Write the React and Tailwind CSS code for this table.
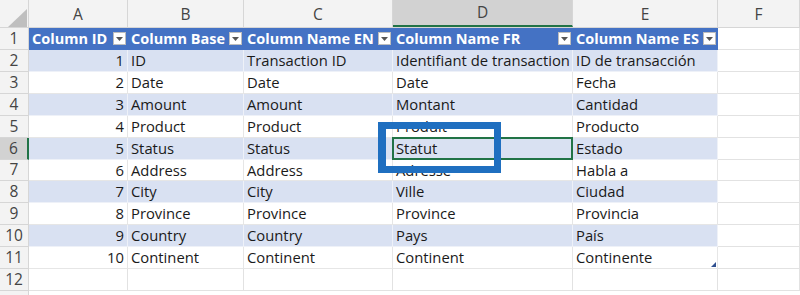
import React from "react";

const colW = ["w-[29px]", "w-[99px]", "w-[116px]", "w-[149px]", "w-[180px]", "w-[145px]"];
const rowH = ["h-[22px]", "h-[22px]", "h-[22px]", "h-[22px]", "h-[22px]", "h-[22px]", "h-[21px]", "h-[22px]", "h-[22px]", "h-[22px]", "h-[22px]", "h-[22px]"];

const data = [
  [1, "ID", "Transaction ID", "Identifiant de transaction", "ID de transacción"],
  [2, "Date", "Date", "Date", "Fecha"],
  [3, "Amount", "Amount", "Montant", "Cantidad"],
  [4, "Product", "Product", "Produit", "Producto"],
  [5, "Status", "Status", "Statut", "Estado"],
  [6, "Address", "Address", "Adresse", "Habla a"],
  [7, "City", "City", "Ville", "Ciudad"],
  [8, "Province", "Province", "Province", "Provincia"],
  [9, "Country", "Country", "Pays", "País"],
  [10, "Continent", "Continent", "Continent", "Continente"],
];

const headers = ["Column ID", "Column Base", "Column Name EN", "Column Name FR", "Column Name ES"];

function Drop() {
  return (
    <div className="w-[13px] h-[13px] bg-white border border-[#bdbdbd] flex items-center justify-center shrink-0 mr-[2px]">
      <svg width="7" height="4" viewBox="0 0 7 4"><path d="M0 0 L7 0 L3.5 4 Z" fill="#555" /></svg>
    </div>
  );
}

export default function App() {
  const font = { fontFamily: '"Open Sans", "Noto Sans", sans-serif' };
  return (
    <div className="relative w-[800px] h-[295px] overflow-hidden bg-white text-[14.8px] text-[#1a1a1a]" style={font}>
      {/* column letters */}
      <div className="flex h-[28px] bg-[#f3f3f3] border-b border-[#d6d6d6] text-[15.5px]">
        <div className={`${colW[0]} relative border-r border-[#d6d6d6] shrink-0`}>
          <svg className="absolute left-[8px] top-[9px]" width="19" height="18" viewBox="0 0 19 18"><path d="M0 18 L19 0 L19 18 Z" fill="#bfbfbf" /></svg>
        </div>
        {["A", "B", "C", "D", "E"].map((l, i) => (
          <div key={l} className={`${colW[i + 1]} shrink-0 flex items-end justify-center pb-[1px] border-r border-[#d6d6d6] text-[#444] ${l === "D" ? "bg-[#d2d2d2] border-b-2 border-b-[#217346]" : ""}`}>{l}</div>
        ))}
        <div className="w-[82px] shrink-0 flex items-end justify-center pb-[1px] border-r border-[#d6d6d6] text-[#444]">F</div>
        <div className="flex-1" />
      </div>

      {/* rows */}
      {Array.from({ length: 12 }).map((_, r) => {
        const rowNum = r + 1;
        const isHeader = r === 0;
        const d = r >= 1 && r <= 10 ? data[r - 1] : null;
        const banded = d && r % 2 === 1;
        const bg = isHeader ? "bg-[#4472c4] text-white font-bold text-[14.5px]" : banded ? "bg-[#d9e1f2]" : "bg-white";
        const sel = rowNum === 6;
        return (
          <div key={r} className={`flex ${rowH[r]}`}>
            <div className={`${colW[0]} shrink-0 flex items-center justify-center border-b border-[#d6d6d6] text-[#444] text-[15.5px] ${sel ? "bg-[#d2d2d2] border-r-2 border-r-[#217346]" : "bg-[#f3f3f3] border-r border-r-[#d6d6d6]"}`}>{rowNum}</div>
            {[0, 1, 2, 3, 4].map((c) => {
              let content = null;
              let cls = "";
              if (isHeader) {
                content = (
                  <>
                    <span className="pl-[3px] whitespace-nowrap overflow-hidden flex-1">{headers[c]}</span>
                    <Drop />
                  </>
                );
                cls = `${bg} border-b border-[#4472c4]`;
              } else if (d) {
                const v = d[c];
                cls = `${bg} border-b border-r ${banded ? "border-[#eef1f8]" : "border-[#e6e6e6]"}`;
                content = c === 0
                  ? <span className="w-full text-right pr-[3px]">{v}</span>
                  : <span className="pl-[3px] whitespace-nowrap">{v}</span>;
              } else {
                cls = "bg-white border-b border-r border-[#e2e2e2]";
              }
              const selected = sel && c === 3;
              return (
                <div key={c} className={`${colW[c + 1]} shrink-0 flex items-center relative ${cls}`}>
                  {content}
                  {selected && <div className="absolute inset-[-1px] border-2 border-[#217346] pointer-events-none" />}
                  {rowNum === 11 && c === 4 && (
                    <svg className="absolute right-[1px] bottom-[1px]" width="5" height="5" viewBox="0 0 5 5"><path d="M5 0 L5 5 L0 5 Z" fill="#2f4f8f" /></svg>
                  )}
                </div>
              );
            })}
            <div className="flex-1 flex">
              <div className="w-[82px] border-b border-r border-[#e2e2e2] bg-white" />
              <div className="flex-1 border-b border-[#e2e2e2] bg-white" />
            </div>
          </div>
        );
      })}
      <div className="flex h-[4px]">
        <div className={`${colW[0]} bg-[#f3f3f3] border-r border-[#d6d6d6]`} />
      </div>

      {/* highlight box */}
      <div className="absolute left-[378px] top-[122px] w-[123px] h-[51px] border-[7px] border-l-[8px] border-[#1f6fc0]" />
    </div>
  );
}
